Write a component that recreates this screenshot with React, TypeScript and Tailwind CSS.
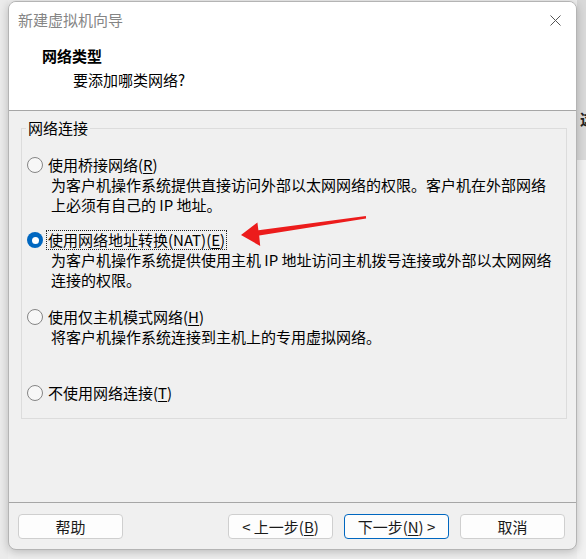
import React from "react";

const font = { fontFamily: '"Noto Sans CJK SC", "Noto Sans", sans-serif' };

function Radio({ checked }: { checked?: boolean }) {
  return checked ? (
    <span className="w-[16px] h-[16px] rounded-full bg-[#0067c0] flex items-center justify-center shrink-0">
      <span className="w-[7px] h-[7px] rounded-full bg-white" />
    </span>
  ) : (
    <span className="w-[16px] h-[16px] rounded-full border border-[#858585] bg-[#f7f7f7] shrink-0" />
  );
}

function Option({
  checked,
  focused,
  children,
}: {
  checked?: boolean;
  focused?: boolean;
  children: React.ReactNode;
}) {
  return (
    <div className="flex items-center h-[20px] pl-[5px]">
      <Radio checked={checked} />
      <span
        className={`ml-[3px] px-[1px] leading-[18px] whitespace-nowrap border border-dotted ${
          focused ? "border-[#222]" : "border-transparent"
        }`}
      >
        {children}
      </span>
    </div>
  );
}

function Desc({ lines }: { lines: string[] }) {
  return (
    <div className="pl-[29px]">
      {lines.map((l) => (
        <div key={l} className="h-[20px] leading-[20px] whitespace-nowrap">
          {l}
        </div>
      ))}
    </div>
  );
}

function U({ c }: { c: string }) {
  return <span className="underline underline-offset-2">{c}</span>;
}

function Btn({ children, primary }: { children: React.ReactNode; primary?: boolean }) {
  return (
    <div
      className={`w-[105px] h-[25px] rounded-[4px] border flex items-center justify-center bg-[#fdfdfd] text-[15px] leading-[20px] text-[#1a1a1a] ${
        primary ? "border-[#0067c0]" : "border-[#cfcfcf]"
      }`}
    >
      {children}
    </div>
  );
}

export default function App() {
  return (
    <div
      className="w-[586px] h-[559px] bg-[#eeeeee] flex overflow-hidden text-[15px] text-black"
      style={font}
    >
      <div className="w-[8px] shrink-0 bg-[#ebebeb]" />
      <div className="mt-[1px] w-[569px] h-[549px] shrink-0 rounded-[8px] border border-[#b4b4b4] bg-[#f0f0f0] shadow-[0_2px_10px_rgba(0,0,0,0.22)] flex flex-col overflow-hidden relative z-10">
        {/* header */}
        <div className="h-[108px] bg-white flex flex-col shrink-0">
          <div className="h-[36px] flex items-center pl-[9px] pr-[15px]">
            <span className="text-[#858585] leading-[20px]">新建虚拟机向导</span>
            <span className="flex-1" />
            <svg width="11" height="11" viewBox="0 0 11 11">
              <path d="M0.5 0.5 L10.5 10.5 M10.5 0.5 L0.5 10.5" stroke="#555" strokeWidth="1" />
            </svg>
          </div>
          <div className="mt-[8px] pl-[33px] font-bold leading-[20px]">网络类型</div>
          <div className="mt-[4px] pl-[64px] leading-[20px]">要添加哪类网络?</div>
        </div>
        <div className="h-[1px] bg-[#a6a6a6] shrink-0" />
        {/* content */}
        <div className="flex-1 flex flex-col">
          <fieldset className="mt-[7px] ml-[12px] mr-[9px] border border-[#dcdcdc] pt-[17px] pb-[15px]">
            <legend className="ml-[4px] px-[2px] leading-[20px]">网络连接</legend>
            <Option>
              使用桥接网络(<U c="R" />)
            </Option>
            <Desc
              lines={[
                "为客户机操作系统提供直接访问外部以太网网络的权限。客户机在外部网络",
                "上必须有自己的 IP 地址。",
              ]}
            />
            <div className="h-[15px]" />
            <Option checked focused>
              使用网络地址转换(NAT)(<U c="E" />)
            </Option>
            <Desc
              lines={[
                "为客户机操作系统提供使用主机 IP 地址访问主机拨号连接或外部以太网网络",
                "连接的权限。",
              ]}
            />
            <div className="h-[17px]" />
            <Option>
              使用仅主机模式网络(<U c="H" />)
            </Option>
            <Desc lines={["将客户机操作系统连接到主机上的专用虚拟网络。"]} />
            <div className="h-[36px]" />
            <Option>
              不使用网络连接(<U c="T" />)
            </Option>
          </fieldset>
        </div>
        <div className="h-[1px] bg-[#a6a6a6] shrink-0" />
        <div className="h-[46px] shrink-0 flex pt-[11px] pl-[9px] pr-[11px]">
          <Btn>帮助</Btn>
          <div className="flex-1" />
          <div className="flex gap-[11px]">
            <Btn>
              &lt; 上一步(<U c="B" />)
            </Btn>
            <Btn primary>
              下一步(<U c="N" />) &gt;
            </Btn>
            <Btn>取消</Btn>
          </div>
        </div>
        {/* red arrow annotation */}
        <svg
          className="absolute left-0 top-0 pointer-events-none"
          width="569"
          height="549"
          viewBox="8 1 569 549"
        >
          <polygon
            points="240,234 256.4,221.5 257.4,229.2 364.9,215 365.1,217.6 258.2,234.6 259.2,245"
            fill="#ec1c1c"
          />
        </svg>
      </div>
      <div className="flex-1 flex flex-col">
        <div className="h-[160px] bg-[#d9d9d9] overflow-hidden pt-[108px]">
          <span className="ml-[3px] leading-[20px] font-bold text-[#222]">这</span>
        </div>
        <div className="flex-1 bg-[#f2f2f2]" />
      </div>
    </div>
  );
}
